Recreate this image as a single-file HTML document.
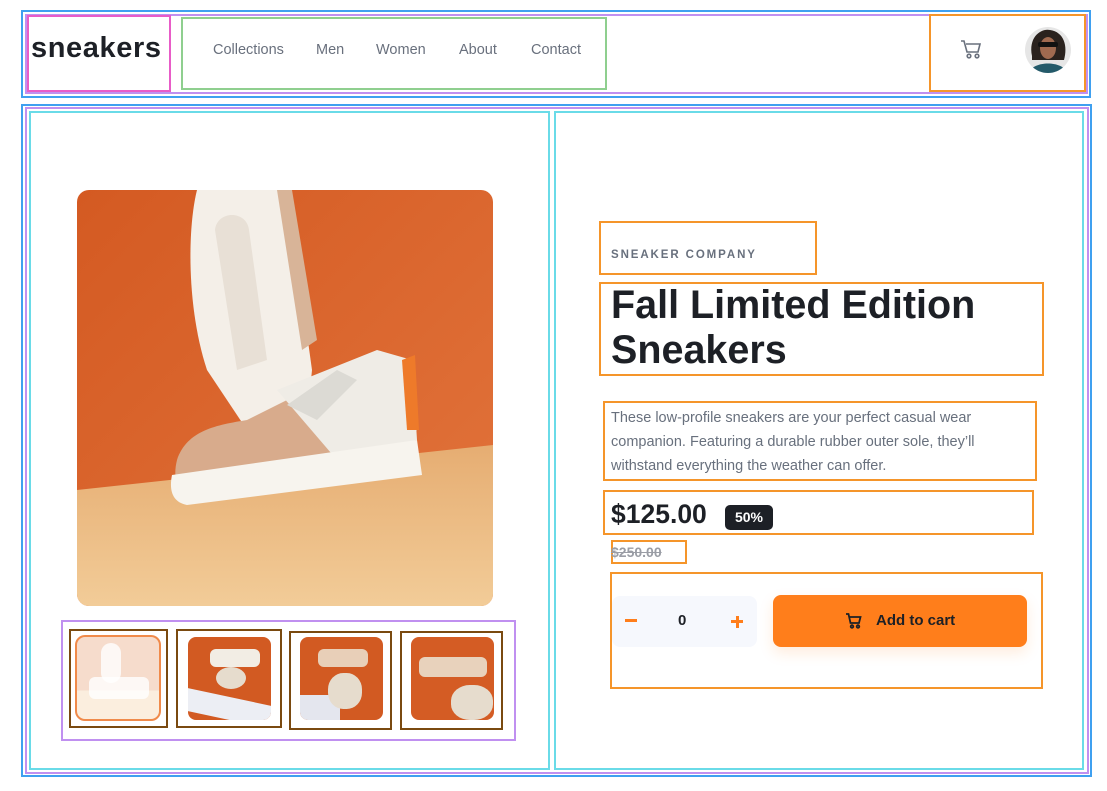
<!DOCTYPE html>
<html><head><meta charset="utf-8">
<style>
*{box-sizing:border-box;margin:0;padding:0}
body{width:1107px;height:791px;background:#fff;position:relative;overflow:hidden;font-family:"Liberation Sans",sans-serif}
.a{position:absolute}
.ob{position:absolute;border:2px solid}
.nav{font-size:14.5px;color:#69707d;top:42px}
</style></head><body>
<!-- header outlines -->
<div class="ob" style="left:21px;top:10px;width:1070px;height:88px;border-color:#3fa0f0"></div>
<div class="ob" style="left:25px;top:14px;width:1063px;height:80px;border-color:#c090f0"></div>
<div class="ob" style="left:27px;top:15px;width:144px;height:77px;border-color:#e85cc8"></div>
<div class="ob" style="left:181px;top:17px;width:426px;height:73px;border-color:#8fcf8f"></div>
<div class="ob" style="left:929px;top:14px;width:157px;height:78px;border-color:#f5952a"></div>
<div class="a" style="left:31px;top:32px;font-size:29px;font-weight:bold;color:#1d2026;letter-spacing:0.6px">sneakers</div>
<div class="a nav" style="left:213px">Collections</div>
<div class="a nav" style="left:316px">Men</div>
<div class="a nav" style="left:376px">Women</div>
<div class="a nav" style="left:459px">About</div>
<div class="a nav" style="left:531px">Contact</div>
<svg class="a" style="left:960px;top:40px" width="22" height="20" viewBox="0 0 22 20" fill="none" stroke="#69707d" stroke-width="1.6"><path d="M1 1h3l3 11h11l2-8H6"/><circle cx="9" cy="16" r="1.8"/><circle cx="17" cy="16" r="1.8"/></svg>
<svg class="a" style="left:1024px;top:26px" width="48" height="48" viewBox="0 0 48 48"><defs><clipPath id="c"><circle cx="24" cy="24" r="23"/></clipPath></defs><g clip-path="url(#c)"><rect width="48" height="48" fill="#e6e6e6"/><path d="M8 30 C4 10 18 2 26 4 C40 6 44 20 40 34 L8 34Z" fill="#2a221e"/><ellipse cx="24" cy="22" rx="8" ry="11" fill="#a06a50"/><rect x="14" y="16" width="20" height="5" rx="2" fill="#111"/><path d="M4 48 C8 34 40 34 44 48Z" fill="#245a6a"/></g></svg>

<!-- main outlines -->
<div class="ob" style="left:21px;top:104px;width:1071px;height:673px;border-color:#3fa0f0"></div>
<div class="ob" style="left:25px;top:107px;width:1064px;height:667px;border-color:#c090f0"></div>
<div class="ob" style="left:29px;top:111px;width:521px;height:659px;border-color:#6adbe8"></div>
<div class="ob" style="left:554px;top:111px;width:530px;height:659px;border-color:#6adbe8"></div>

<!-- main image -->
<svg class="a" style="left:77px;top:190px;border-radius:12px" width="416" height="416" viewBox="0 0 416 416">
<defs><linearGradient id="bg" x1="0" y1="0" x2="1" y2="1"><stop offset="0" stop-color="#d45a22"/><stop offset="1" stop-color="#e2743c"/></linearGradient>
<linearGradient id="fl" x1="0" y1="0" x2="0" y2="1"><stop offset="0" stop-color="#e6ad72"/><stop offset="1" stop-color="#f2cc98"/></linearGradient></defs>
<rect width="416" height="416" fill="url(#bg)"/>
<path d="M0 300 L416 255 L416 416 L0 416Z" fill="url(#fl)"/>
<path d="M120 0 L210 0 L235 180 L230 230 L170 240 L130 180 C110 120 110 40 120 0Z" fill="#f4efe8"/>
<path d="M138 40 C140 20 170 20 172 40 L190 170 L160 180Z" fill="#e8e0d6"/>
<path d="M200 0 L215 0 L240 150 L225 160Z" fill="#d8b498"/>
<path d="M100 270 C110 240 140 235 170 230 L230 200 L300 180 L330 170 L340 240 L300 290 L130 310 C100 310 95 290 100 270Z" fill="#d8ab8c"/>
<path d="M200 200 L300 160 L335 170 L340 250 L260 270 Z" fill="#efece6"/>
<path d="M210 215 L260 180 L280 190 L240 230Z" fill="#dcdad4"/>
<path d="M95 285 L340 250 L345 285 L110 315 C95 312 92 300 95 285Z" fill="#f7f4ee"/>
<path d="M325 170 L338 165 L342 240 L330 240Z" fill="#ee7a2a"/>
</svg>

<!-- thumbnails -->
<div class="ob" style="left:61px;top:620px;width:455px;height:121px;border-color:#c090f0"></div>
<div class="ob" style="left:69px;top:629px;width:99px;height:99px;border-color:#7a4a10"></div>
<div class="ob" style="left:176px;top:629px;width:106px;height:99px;border-color:#7a4a10"></div>
<div class="ob" style="left:289px;top:631px;width:103px;height:99px;border-color:#7a4a10"></div>
<div class="ob" style="left:400px;top:631px;width:103px;height:99px;border-color:#7a4a10"></div>
<div class="a" style="left:75px;top:635px;width:86px;height:86px;border-radius:10px;border:2px solid #f08a4a;background:linear-gradient(#f6dccc 0 65%,#fbeede 65%)"><div class="a" style="left:12px;top:40px;width:60px;height:22px;background:#fff;border-radius:6px;opacity:.8"></div><div class="a" style="left:24px;top:6px;width:20px;height:40px;background:#fff;border-radius:10px;opacity:.8"></div></div>
<div class="a" style="left:188px;top:637px;width:83px;height:83px;border-radius:8px;overflow:hidden;background:#d25a22"><div class="a" style="left:0;top:60px;width:83px;height:23px;background:#eceef4;transform:skewY(12deg)"></div><div class="a" style="left:28px;top:30px;width:30px;height:22px;background:#e6dccd;border-radius:50%"></div><div class="a" style="left:22px;top:12px;width:50px;height:18px;background:#f2ede4;border-radius:6px"></div></div>
<div class="a" style="left:300px;top:637px;width:83px;height:83px;border-radius:8px;overflow:hidden;background:#d25a22"><div class="a" style="left:0;top:58px;width:40px;height:25px;background:#e4e6ee"></div><div class="a" style="left:28px;top:36px;width:34px;height:36px;background:#e6dccd;border-radius:45%"></div><div class="a" style="left:18px;top:12px;width:50px;height:18px;background:#e8cfb8;border-radius:6px"></div></div>
<div class="a" style="left:411px;top:637px;width:83px;height:83px;border-radius:8px;overflow:hidden;background:#d45c24"><div class="a" style="left:40px;top:48px;width:42px;height:35px;background:#e6dccd;border-radius:45%"></div><div class="a" style="left:8px;top:20px;width:68px;height:20px;background:#e8d2bc;border-radius:6px"></div></div>

<!-- right side -->
<div class="ob" style="left:599px;top:221px;width:218px;height:54px;border-color:#f5952a"></div>
<div class="a" style="left:611px;top:249px;font-size:11.5px;font-weight:bold;letter-spacing:1.9px;color:#68707d">SNEAKER COMPANY</div>
<div class="ob" style="left:599px;top:282px;width:445px;height:94px;border-color:#f5952a"></div>
<div class="a" style="left:611px;top:283px;font-size:39.5px;line-height:45px;font-weight:bold;color:#1d2026">Fall Limited Edition<br>Sneakers</div>
<div class="ob" style="left:603px;top:401px;width:434px;height:80px;border-color:#f5952a"></div>
<div class="a" style="left:611px;top:406px;font-size:14.5px;line-height:24px;color:#68707d;width:420px">These low-profile sneakers are your perfect casual wear companion. Featuring a durable rubber outer sole, they’ll withstand everything the weather can offer.</div>
<div class="ob" style="left:603px;top:490px;width:431px;height:45px;border-color:#f5952a"></div>
<div class="a" style="left:611px;top:499px;font-size:26.5px;font-weight:bold;color:#1d2026">$125.00</div>
<div class="a" style="left:725px;top:505px;width:48px;height:25px;border-radius:5px;background:#1d2026;color:#fff;font-size:14px;font-weight:bold;text-align:center;line-height:25px">50%</div>
<div class="ob" style="left:611px;top:540px;width:76px;height:24px;border-color:#f5952a"></div>
<div class="a" style="left:611px;top:544px;font-size:14px;font-weight:bold;color:#9a9da5;text-decoration:line-through">$250.00</div>
<div class="ob" style="left:610px;top:572px;width:433px;height:117px;border-color:#f5952a"></div>
<div class="a" style="left:612px;top:596px;width:145px;height:51px;border-radius:8px;background:#f6f8fd"></div>
<div class="a" style="left:625px;top:619px;width:12px;height:3px;background:#ff7e1b"></div>
<div class="a" style="left:678px;top:612px;font-size:15px;font-weight:bold;color:#1d2026">0</div>
<div class="a" style="left:731px;top:620px;width:12px;height:3px;background:#ff7e1b"></div>
<div class="a" style="left:735.5px;top:615.5px;width:3px;height:12px;background:#ff7e1b"></div>
<div class="a" style="left:773px;top:595px;width:254px;height:52px;border-radius:8px;background:#ff7e1b;box-shadow:0 6px 14px rgba(255,126,27,.15)"></div>
<svg class="a" style="left:845px;top:613px" width="17" height="16" viewBox="0 0 17 16" fill="none" stroke="#1d2026" stroke-width="1.8"><path d="M1 1h2.5l2 9h8.5l1.5-6H4.5"/><circle cx="7" cy="13.5" r="1.3"/><circle cx="13" cy="13.5" r="1.3"/></svg>
<div class="a" style="left:876px;top:612px;font-size:15px;font-weight:bold;color:#1d2026">Add to cart</div>
</body></html>
